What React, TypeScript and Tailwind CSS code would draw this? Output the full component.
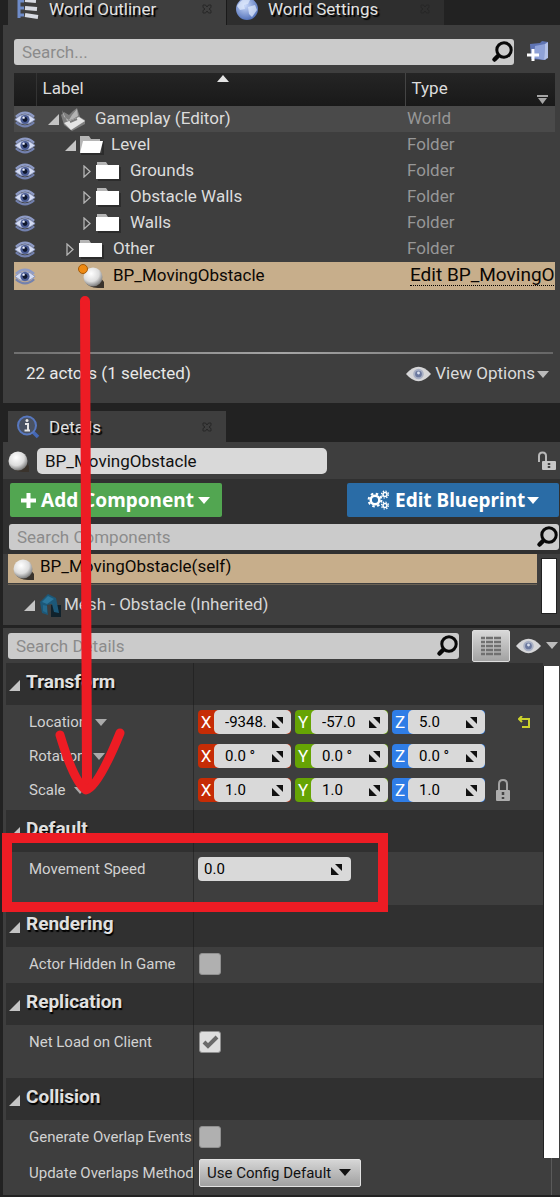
import React, { useState } from "react";
import clsx from "clsx";

type IconProps = { className?: string };

function SearchIcon({ className }: IconProps) {
  return (
    <svg viewBox="0 0 22 22" className={clsx("w-[22px] h-[22px] shrink-0", className)} fill="none" stroke="#080808" strokeLinecap="round">
      <circle cx="13" cy="9" r="7.200" strokeWidth="3" />
      <path d="M7 15 L3.500 18.500" strokeWidth="4.500" />
    </svg>
  );
}

function EyeIcon() {
  return (
    <svg viewBox="0 0 24 18" className="w-[22px] h-[17px]">
      <path d="M1 9 Q12 -2 23 9 Q12 19 1 9Z" fill="#d5dcf2" stroke="#8390bb" strokeWidth="1" />
      <path d="M2 6 Q12 -3 22 6" fill="none" stroke="#8e9bc6" strokeWidth="2.500" />
      <path d="M2 12 Q12 21 22 12" fill="none" stroke="#7381ae" strokeWidth="2.500" />
      <circle cx="12" cy="9" r="5" fill="#4b5c93" />
      <circle cx="12" cy="9" r="2.600" fill="#10182f" />
      <circle cx="10.500" cy="7" r="1.300" fill="#eef2ff" />
    </svg>
  );
}

function SilverEye() {
  return (
    <svg viewBox="0 0 26 16" className="w-[25px] h-4 shrink-0">
      <path d="M0 8 Q13 -7 26 8 Q13 23 0 8Z" fill="#d6d6d8" />
      <circle cx="13" cy="8" r="5.500" fill="#a9b0c4" />
      <circle cx="13" cy="8" r="3.500" fill="#6b789e" />
      <circle cx="13" cy="7" r="1.500" fill="#dbe1f0" />
    </svg>
  );
}

function Caret({ className }: IconProps) {
  return (
    <svg viewBox="0 0 12 7" className={clsx("w-3 h-[7px] shrink-0", className)} fill="currentColor">
      <path d="M0 0H12L6 7Z" />
    </svg>
  );
}

function OpenArrow() {
  return (
    <svg viewBox="0 0 11 11" className="w-[11px] h-[11px] shrink-0">
      <path d="M11 0V11H0Z" fill="#c4c4c4" />
    </svg>
  );
}

function ClosedArrow() {
  return (
    <svg viewBox="0 0 8 13" className="w-2 h-[13px] shrink-0">
      <path d="M1 1V12L7 6.500Z" fill="none" stroke="#b4b4b4" strokeWidth="1.300" />
    </svg>
  );
}

function FolderIcon({ open }: { open?: boolean }) {
  return (
    <svg viewBox="0 0 25 20" className="w-[25px] h-5 shrink-0">
      <path d="M2 20H25V6H23V18H2Z" fill="#2c2c2c" />
      <path d="M1 1H10L12 4H21V17H1Z" fill="#b5b5b5" />
      {open ? <path d="M4 6H24L21 18H1Z" fill="#fff" /> : <path d="M0 4H23V18H0Z" fill="#fff" />}
    </svg>
  );
}

function WorldIcon() {
  return (
    <svg viewBox="0 0 26 24" className="w-[26px] h-6 shrink-0">
      <path d="M1 8L4 5L9 8L13 4L17 1L20 10L25 13V17L12 24L4 18Z" fill="#7f7f7f" />
      <path d="M4 16L19 10L25 14L11 23Z" fill="#e4e4e4" />
      <path d="M2 3L4 10L9 13L12 8L17 2L18 9L13 12L7 14Z" fill="#b4b4b4" />
      <path d="M10 15L17 12" stroke="#7b7b7b" strokeWidth="2" />
    </svg>
  );
}

function SphereIcon({ marked }: { marked?: boolean }) {
  return (
    <svg viewBox="0 0 27 25" className="w-[27px] h-[25px] shrink-0">
      <defs>
        <radialGradient id="ball" cx="40%" cy="32%" r="70%">
          <stop offset="0" stopColor="#fff" />
          <stop offset="0.600" stopColor="#dcdcdc" />
          <stop offset="1" stopColor="#777" />
        </radialGradient>
      </defs>
      <path d="M7 17Q10 24 20 24H26V18L22 13Z" fill="#3a332c" />
      <circle cx="15" cy="13" r="9.500" fill="url(#ball)" />
      {marked && <circle cx="5" cy="5" r="4.500" fill="#ef8a12" stroke="#a55a06" />}
    </svg>
  );
}

function OutlinerIcon() {
  return (
    <svg viewBox="0 0 24 22" className="w-6 h-[22px] shrink-0">
      <path d="M3 0V20M3 3H8M3 10H8M3 17H8" stroke="#6f8cc9" strokeWidth="3" fill="none" />
      <path d="M9 2L20 3M9 10L21 11M9 17L22 19" stroke="#d8dbe3" strokeWidth="4" />
    </svg>
  );
}

function GlobeIcon() {
  return (
    <svg viewBox="0 0 24 24" className="w-6 h-6 shrink-0">
      <defs>
        <radialGradient id="globe" cx="42%" cy="35%" r="65%">
          <stop offset="0" stopColor="#c9d9fa" />
          <stop offset="1" stopColor="#5674bb" />
        </radialGradient>
      </defs>
      <circle cx="12" cy="12" r="11" fill="url(#globe)" />
      <path d="M5 5Q10 0 15 3L13 7L9 8L10 12L5 13L2 9ZM13 10L20 8L22 13L17 20L14 17Z" fill="#e3ecfd" opacity="0.700" />
    </svg>
  );
}

function InfoIcon() {
  return (
    <svg viewBox="0 0 24 24" className="w-6 h-6 shrink-0">
      <path d="M17 17L22 22" stroke="#4568b5" strokeWidth="3.500" />
      <circle cx="11" cy="10.500" r="9" fill="#4a5262" stroke="#5878bf" strokeWidth="2" />
      <path d="M9 9H12V15M8.500 15.500H14" stroke="#e6e6e6" strokeWidth="2" fill="none" />
      <circle cx="11" cy="5.500" r="1.500" fill="#e6e6e6" />
    </svg>
  );
}

function NewFolderIcon() {
  return (
    <svg viewBox="0 0 24 24" className="w-6 h-6">
      <path d="M4 4L14 3L16 1L22 2L20 20L5 19Z" fill="#5f74b3" />
      <path d="M9 6L19 4L18 20L8 18Z" fill="#8fa2d8" />
      <path d="M19 4L22 2L22 18L18 20Z" fill="#b3c1e8" />
      <path d="M7 9V21M1 15H13" stroke="#fff" strokeWidth="3" />
    </svg>
  );
}

function MeshIcon() {
  return (
    <svg viewBox="0 0 23 24" className="w-[23px] h-6 shrink-0">
      <path d="M12 12H22V24H12Z" fill="#10222c" />
      <path d="M1 9L9 1L17 5L20 20L15 19L13 11L8 12L9 22L3 20Z" fill="#1c5878" />
      <path d="M3 9L9 3L15 6L8 11Z" fill="#2b769c" />
      <path d="M4 12L8 13V20L4 18Z" fill="#256a8e" />
    </svg>
  );
}

function GearsIcon() {
  return (
    <svg viewBox="0 0 23 20" className="w-[23px] h-5 shrink-0" fill="none" stroke="#fff">
      <circle cx="8" cy="10" r="4.300" strokeWidth="2.500" />
      <circle cx="8" cy="10" r="6.400" strokeWidth="2" strokeDasharray="2.500 2.527" />
      <circle cx="18" cy="4.500" r="2" strokeWidth="1.600" />
      <circle cx="18" cy="4.500" r="3.500" strokeWidth="1.200" strokeDasharray="1.400 1.350" />
      <circle cx="18" cy="15.500" r="2" strokeWidth="1.600" />
      <circle cx="18" cy="15.500" r="3.500" strokeWidth="1.200" strokeDasharray="1.400 1.350" />
    </svg>
  );
}

function LockIcon() {
  return (
    <svg viewBox="0 0 16 24" className="w-4 h-6">
      <path d="M4 12V6Q4 2 8 2T12 6V12" fill="none" stroke="#a2a2a2" strokeWidth="2" />
      <rect x="1" y="12" width="14" height="11" rx="1" fill="#adadad" />
      <path d="M8 14V17M8 19V21" stroke="#444" strokeWidth="2.500" />
    </svg>
  );
}

function UnlockIcon() {
  return (
    <svg viewBox="0 0 20 20" className="w-5 h-5">
      <path d="M2 11V5Q2 1.500 5.500 1.500T9 5V10" fill="none" stroke="#b8b8b8" strokeWidth="2" />
      <rect x="5" y="10" width="14" height="9" rx="1" fill="#c6c6c6" />
      <path d="M12 12V14M12 15V17" stroke="#444" strokeWidth="2.500" />
    </svg>
  );
}

function DragIcon() {
  return (
    <svg viewBox="0 0 13 13" className="w-[13px] h-[13px] shrink-0" fill="#111">
      <path d="M5 1H12V8Z" />
      <path d="M1 4L9 12H1Z" />
    </svg>
  );
}

function TabClose() {
  return (
    <svg viewBox="0 0 10 10" className="w-[10px] h-[10px]">
      <path d="M1 1H3.500L5 3L6.500 1H9V3.500L7 5L9 6.500V9H6.500L5 7L3.500 9H1V6.500L3 5L1 3.500Z" fill="none" stroke="#262626" />
    </svg>
  );
}

const outlinerRows = [
  { label: "Gameplay (Editor)", type: "World", icon: "world", indent: "pl-3 gap-[1px]", open: true },
  { label: "Level", type: "Folder", icon: "open", indent: "pl-[29px] gap-[3px]", open: true },
  { label: "Grounds", type: "Folder", icon: "folder", indent: "pl-[47px] gap-[5px]" },
  { label: "Obstacle Walls", type: "Folder", icon: "folder", indent: "pl-[47px] gap-[5px]" },
  { label: "Walls", type: "Folder", icon: "folder", indent: "pl-[47px] gap-[5px]" },
  { label: "Other", type: "Folder", icon: "folder", indent: "pl-[30px] gap-[5px]" },
];

function Tab({ title, icon, active }: { title: string; icon: React.ReactNode; active?: boolean }) {
  return (
    <button
      className={clsx(
        "flex items-center w-[218px] pl-2 pr-[14px] text-[17px] leading-4 text-[#e2e2e2]",
        active ? "bg-[#3e3e3e]" : "bg-[#2e2e2e] border-l border-[#1a1a1a]"
      )}
    >
      {icon}
      <span className="ml-[9px] flex-1 text-left whitespace-nowrap [text-shadow:2px_2px_1px_#000]">{title}</span>
      <TabClose />
    </button>
  );
}

function SearchBox({ placeholder, className }: { placeholder: string; className?: string }) {
  return (
    <div className={clsx("flex items-center h-[26px] pl-2 pr-px bg-[#cbcbcb] rounded-[3px]", className)}>
      <input
        type="text"
        aria-label={placeholder}
        placeholder={placeholder}
        className="flex-1 min-w-0 h-full text-[17px] text-black placeholder:text-[#8b8b8b] outline-none"
      />
      <SearchIcon />
    </div>
  );
}

function Outliner() {
  return (
    <section>
      <div className="flex h-[25px] pl-[5px] overflow-hidden">
        <div className="flex -mt-2 h-[33px]">
          <Tab title="World Outliner" icon={<OutlinerIcon />} active />
          <Tab title="World Settings" icon={<GlobeIcon />} />
        </div>
      </div>
      <div className="bg-[#3e3e3e] pt-[14px] pl-[11px] pb-[17px]">
        <div className="flex items-center pr-[10px]">
          <SearchBox placeholder="Search..." className="flex-1" />
          <button aria-label="Create folder" className="ml-3">
            <NewFolderIcon />
          </button>
        </div>
        <div className="pr-[5px] mt-2">
          <table className="w-full table-fixed text-[17px] text-[#dcdcdc] border-collapse">
            <colgroup>
              <col className="w-[22px]" />
              <col />
              <col className="w-[150px]" />
            </colgroup>
            <thead>
              <tr className="h-[33px] bg-linear-to-b from-[#252525] to-[#191919] text-left">
                <th className="p-0 border-r border-[#333]" />
                <th className="p-0 pb-[2px] font-normal relative">
                  <span className="pl-[6px]">Label</span>
                  <Caret className="absolute top-[2px] left-[49%] rotate-180 text-[#e4e4e4]" />
                </th>
                <th className="p-0 pb-[2px] font-normal border-l border-[#444]">
                  <div className="flex justify-between pl-[6px] pr-[7px]">
                    Type
                    <svg viewBox="0 0 11 10" className="w-[11px] h-[10px] -mb-1 self-end" fill="#a5a5a5">
                      <path d="M0 0H11V2H0ZM1 3H10L5.500 9Z" />
                    </svg>
                  </div>
                </th>
              </tr>
            </thead>
            <tbody>
              {outlinerRows.map((row) => (
                <tr key={row.label} className={clsx("h-[26px]", row.icon === "world" && "bg-[#4a4a4a]")}>
                  <td className="p-0">
                    <EyeIcon />
                  </td>
                  <td className="p-0">
                    <div className={clsx("flex items-center h-[26px] whitespace-nowrap", row.indent)}>
                      {row.open ? <OpenArrow /> : <ClosedArrow />}
                      {row.icon === "world" ? <WorldIcon /> : <FolderIcon open={row.icon === "open"} />}
                      <span className={row.icon === "world" ? "ml-2" : "ml-1"}>{row.label}</span>
                    </div>
                  </td>
                  <td className="p-0 pl-[2px] text-[#979797]">{row.type}</td>
                </tr>
              ))}
              <tr className="h-7 bg-[#c7ae8b] text-[#0c0804]">
                <td className="p-0">
                  <EyeIcon />
                </td>
                <td className="p-0">
                  <div className="flex items-center pl-[42px] h-7">
                    <SphereIcon marked />
                    <span className="ml-2">BP_MovingObstacle</span>
                  </div>
                </td>
                <td className="p-0 pl-[5px] overflow-hidden whitespace-nowrap">
                  <a href="#blueprint" className="inline-block text-[19px] leading-5 border-b border-dotted border-black">
                    Edit BP_MovingObstacle
                  </a>
                </td>
              </tr>
            </tbody>
          </table>
        </div>
        <div className="mt-[62px] mr-[7px] h-[2px] bg-linear-to-r from-[#707070] via-[#a5a5a5] to-[#666]" />
        <div className="flex items-center justify-between mt-2 pl-3 pr-[11px] h-6 text-[17px] text-[#e8e8e8]">
          <span>22 actors (1 selected)</span>
          <button className="flex items-center text-[#dadada]">
            <SilverEye />
            <span className="ml-1 mr-[2px]">View Options</span>
            <Caret className="text-[#bbb]" />
          </button>
        </div>
      </div>
    </section>
  );
}

function Category({ title, children }: { title: string; children: React.ReactNode }) {
  return (
    <section>
      <h2 className="flex h-[42px] bg-[#303030] text-[19px] font-bold text-[#e0e0e0]">
        <button className="flex items-center w-[187px] pl-[3px] pb-1">
          <span className="pt-[6px]">
            <OpenArrow />
          </span>
          <span className="ml-[6px] [text-shadow:1px_2px_1px_#000]">{title}</span>
        </button>
        <span className="flex-1 border-l border-[#242424]" />
      </h2>
      {children}
    </section>
  );
}

function Row({ label, htmlFor, menu, className, children }: {
  label: string;
  htmlFor: string;
  menu?: boolean;
  className: string;
  children: React.ReactNode;
}) {
  return (
    <div className={clsx("flex", className)}>
      <div className="flex items-center w-[187px] h-[34px] pl-[23px] overflow-hidden">
        <label htmlFor={htmlFor} className="text-[15px] text-[#d2d2d2] whitespace-nowrap">
          {label}
        </label>
        {menu && (
          <button aria-label={label + " mode"} className="ml-2 text-[#aaa]">
            <Caret />
          </button>
        )}
      </div>
      <div className="flex-1 border-l border-[#2b2b2b] pl-1">
        <div className="flex items-center h-[34px]">{children}</div>
      </div>
    </div>
  );
}

const axisColors: Record<string, string> = {
  X: "bg-[#c62c05]",
  Y: "bg-[#66a404]",
  Z: "bg-[#2f7de6]",
};

function VectorInput({ name, values }: { name: string; values: string[] }) {
  return (
    <div className="flex gap-1">
      {["X", "Y", "Z"].map((axis, i) => (
        <div key={axis} className={clsx("flex items-center w-[93px] h-6 rounded-[4px]", axisColors[axis])}>
          <label htmlFor={name + axis} className="w-4 text-center text-[17px] leading-6 text-white">
            {axis}
          </label>
          <div className="flex items-center flex-1 min-w-0 h-6 pl-[11px] pr-[7px] bg-[#d9d9d9] rounded-[5px]">
            <input id={name + axis} type="text" defaultValue={values[i]} className="flex-1 min-w-0 mr-1 text-[15px] text-black outline-none" />
            <DragIcon />
          </div>
        </div>
      ))}
    </div>
  );
}

function Checkbox({ id, initial }: { id: string; initial: boolean }) {
  const [checked, setChecked] = useState(initial);
  return (
    <div className="grid ml-px">
      <input
        id={id}
        type="checkbox"
        checked={checked}
        onChange={(e) => setChecked(e.target.checked)}
        className="col-start-1 row-start-1 appearance-none w-[22px] h-[22px] rounded-[3px] border border-[#909090] bg-[#b0b0b0] checked:bg-[#dedede]"
      />
      {checked && (
        <svg viewBox="0 0 22 22" className="col-start-1 row-start-1 w-[22px] h-[22px] pointer-events-none" fill="none" stroke="#6a6a6a" strokeWidth="4">
          <path d="M5 11L9 15L18 6" />
        </svg>
      )}
    </div>
  );
}

function Details() {
  return (
    <section className="pt-2">
      <div className="flex h-[31px] pl-[5px]">
        <Tab title="Details" icon={<InfoIcon />} active />
      </div>
      <div className="bg-[#3e3e3e]">
        <div className="flex items-center h-[37px] pr-[3px]">
          <SphereIcon />
          <input
            type="text"
            aria-label="Actor name"
            defaultValue="BP_MovingObstacle"
            className="ml-[7px] w-[290px] h-[26px] pl-2 rounded-[5px] bg-[#d9d9d9] text-[17px] text-[#111] outline-none"
          />
          <button aria-label="Lock selection" className="ml-auto">
            <UnlockIcon />
          </button>
        </div>
        <div className="bg-[#303030] pr-px pb-1 pl-[6px]">
          <div className="flex justify-between pt-1 pl-px font-['Noto_Sans'] text-[19px] font-bold text-white [text-shadow:2px_2px_1px_#0008]">
            <button className="flex items-center w-[212px] h-[34px] pl-[11px] rounded-[2px] bg-[#52a651] whitespace-nowrap">
              <svg viewBox="0 0 15 15" className="w-[15px] h-[15px] shrink-0">
                <path d="M7.500 0V15M0 7.500H15" stroke="#fff" strokeWidth="4" />
              </svg>
              <span className="ml-[5px] mr-1">Add Component</span>
              <Caret />
            </button>
            <button className="flex items-center w-[212px] h-[34px] pl-5 rounded-[2px] bg-[#2a6ca6] whitespace-nowrap">
              <GearsIcon />
              <span className="ml-[5px] mr-[2px]">Edit Blueprint</span>
              <Caret />
            </button>
          </div>
          <SearchBox placeholder="Search Components" className="mt-[7px]" />
        </div>
        <div className="flex h-[71px] pl-[5px] pr-[3px]">
          <div className="flex-1 text-[17px]">
            <div className="flex items-center h-[29px] bg-[#c7ae8b] text-[#0c0804]">
              <SphereIcon />
              <span className="ml-[5px] pb-1">BP_MovingObstacle(self)</span>
            </div>
            <div className="mt-px border-t border-[#6a6154] flex items-center h-[41px] pl-4 text-[#d6d6d6]">
              <OpenArrow />
              <span className="ml-1">
                <MeshIcon />
              </span>
              <span className="ml-[2px]">Mesh - Obstacle (Inherited)</span>
            </div>
          </div>
          <div className="ml-1 mt-1 w-4 h-14 bg-white border border-[#222]" />
        </div>
        <div className="h-[3px] bg-[#232323]" />
        <div className="flex items-center h-[35px] pl-[5px] pr-[2px]">
          <SearchBox placeholder="Search Details" className="flex-1" />
          <button aria-label="Property matrix" className="ml-[13px] flex items-center justify-center w-[38px] h-8 rounded-[2px] border border-[#ddd] bg-linear-to-b from-[#d8d8d8] to-[#a2a2a2]">
            <svg viewBox="0 0 20 20" className="w-5 h-5" stroke="#707070" strokeWidth="2.500">
              <path d="M0 2H4M5 2H12M13 2H20M0 6H4M5 6H12M13 6H20M0 10H4M5 10H12M13 10H20M0 14H4M5 14H12M13 14H20M0 18H4M5 18H12M13 18H20" />
            </svg>
          </button>
          <button aria-label="Details view options" className="ml-[6px] flex items-center gap-[5px] text-[#bbb]">
            <SilverEye />
            <Caret />
          </button>
        </div>
        <div className="flex pl-[3px]">
          <div className="flex-1 min-w-0">
            <Category title="Transform">
              <Row label="Location" htmlFor="locX" menu className="h-[34px]">
                <VectorInput name="loc" values={["-9348.0", "-57.0", "5.0"]} />
                <button aria-label="Reset location" className="ml-auto mr-3">
                  <svg viewBox="0 0 13 13" className="w-[13px] h-[13px]" fill="none" stroke="#cbd22c" strokeWidth="2">
                    <path d="M1 3H11V11H4" />
                    <path d="M4 0L1 3L4 6" />
                  </svg>
                </button>
              </Row>
              <Row label="Rotation" htmlFor="rotX" menu className="h-[34px]">
                <VectorInput name="rot" values={["0.0 °", "0.0 °", "0.0 °"]} />
              </Row>
              <Row label="Scale" htmlFor="scaleX" menu className="h-[37px]">
                <VectorInput name="scale" values={["1.0", "1.0", "1.0"]} />
                <button aria-label="Lock scale" className="ml-[10px]">
                  <LockIcon />
                </button>
              </Row>
            </Category>
            <Category title="Default">
              <Row label="Movement Speed" htmlFor="speed" className="h-[53px]">
                <div className="flex items-center w-[153px] h-6 pl-[6px] pr-2 bg-[#d9d9d9] rounded-[4px]">
                  <input id="speed" type="text" defaultValue="0.0" className="flex-1 min-w-0 text-[15px] text-black outline-none" />
                  <DragIcon />
                </div>
              </Row>
            </Category>
            <Category title="Rendering">
              <Row label="Actor Hidden In Game" htmlFor="hidden" className="h-9">
                <Checkbox id="hidden" initial={false} />
              </Row>
            </Category>
            <Category title="Replication">
              <Row label="Net Load on Client" htmlFor="net" className="h-[53px]">
                <Checkbox id="net" initial />
              </Row>
            </Category>
            <Category title="Collision">
              <Row label="Generate Overlap Events" htmlFor="overlap" className="h-9">
                <Checkbox id="overlap" initial={false} />
              </Row>
              <Row label="Update Overlaps Method" htmlFor="method" className="h-[39px]">
                <div className="relative ml-px">
                  <select id="method" className="appearance-none w-[162px] h-7 pl-[7px] rounded-[2px] border border-[#e2e2e2] bg-linear-to-b from-[#d6d6d6] to-[#a0a0a0] text-[15px] text-[#111]">
                    <option>Use Config Default</option>
                  </select>
                  <Caret className="absolute right-[10px] top-[10px] text-[#111] pointer-events-none" />
                </div>
              </Row>
            </Category>
          </div>
          <div className="flex flex-col items-center w-4 mr-px pt-[3px]">
            <div className="w-full h-[93%] bg-white border-l border-[#222]" />
            <div className="flex-1 w-px bg-[#5a5a5a]" />
          </div>
        </div>
      </div>
    </section>
  );
}

export default function App() {
  return (
    <div className="relative min-h-screen overflow-hidden pl-[3px] bg-[#222] font-[Roboto,sans-serif]">
      <Outliner />
      <Details />

      {/* red marker arrow and frame pointing at Movement Speed */}
      <svg viewBox="0 0 80 510" className="absolute left-[50px] top-[295px] w-20 h-[510px] pointer-events-none" fill="none" stroke="#ed1c24" strokeLinecap="round" strokeLinejoin="round">
        <path d="M35 6L37 488" strokeWidth="10" />
        <path d="M10 440Q24 487 36 495Q48 492 70 438" strokeWidth="9" />
      </svg>
      <div className="absolute left-[2px] top-[833px] w-[386px] h-[79px] border-[10px] border-[#ed1c24] pointer-events-none" />
    </div>
  );
}
